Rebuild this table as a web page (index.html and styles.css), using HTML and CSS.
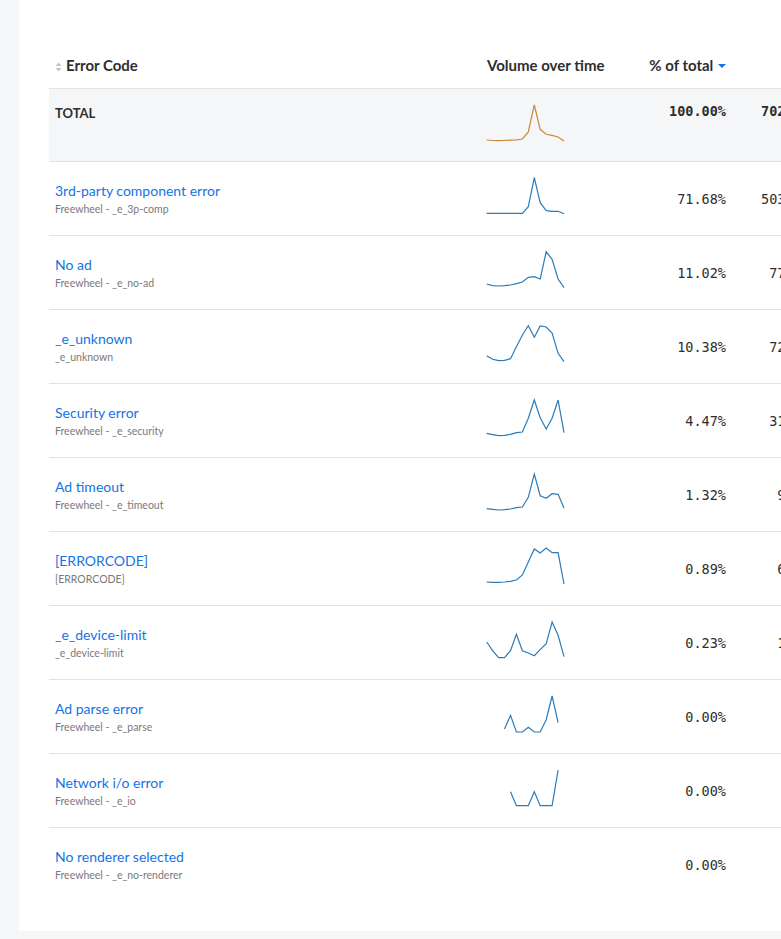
FILE: index.html
```html
<!DOCTYPE html>
<html>
<head>
<meta charset="utf-8">
<link rel="stylesheet" href="styles.css">
</head>
<body>
<div class="panel">
<table class="grid">
<colgroup><col class="c-name"><col class="c-vol"><col class="c-pct"><col class="c-cnt"></colgroup>
<thead>
<tr>
<th class="h-name"><span class="sort"><svg width="7" height="10" viewBox="0 0 7 10"><path d="M3.5 0.5 L6.5 4 H0.5 Z M3.5 9.5 L6.5 6 H0.5 Z" fill="#c4c4c4"/></svg></span>Error Code</th>
<th class="h-vol">Volume over time</th>
<th class="h-pct">% of total <svg class="caret" width="8" height="4" viewBox="0 0 8 4"><path d="M0 0 H8 L4 4 Z" fill="#1473e6"/></svg></th>
<th class="h-cnt"></th>
</tr>
</thead>
<tbody>
<tr class="total">
<td class="name"><span class="total-label">TOTAL</span></td>
<td class="vol"><svg class="spark" width="80" height="72" viewBox="0 0 80 72"><polyline class="line-total" points="0.7,51 6.6,51.5 12.6,51.7 18.5,51.5 24.5,51.2 30.4,51 36.4,50 42.3,43 48.3,16 54.2,40.3 60.2,45.3 66.1,46.3 72.1,48 78,52"/></svg></td>
<td class="pct">100.00%</td>
<td class="cnt">702,418</td>
</tr>
<tr>
<td class="name"><a class="title">3rd-party component error</a><div class="sub">Freewheel - _e_3p-comp</div></td>
<td class="vol"><svg class="spark" width="80" height="73" viewBox="0 1 80 73"><polyline class="line" points="0.7,52.3 6.6,52.3 12.6,52.3 18.5,52.3 24.5,52.3 30.4,52.3 36.4,52.3 42.3,45.7 48.3,16.7 54.2,41.7 60.2,49.7 66.1,50.3 72.1,50.3 78,52.7"/></svg></td>
<td class="pct">71.68%</td>
<td class="cnt">503,493</td>
</tr>
<tr>
<td class="name"><a class="title">No ad</a><div class="sub">Freewheel - _e_no-ad</div></td>
<td class="vol"><svg class="spark" width="80" height="73" viewBox="0 1 80 73"><polyline class="line" points="0.7,49 6.6,50.7 12.6,51 18.5,50.7 24.5,50 30.4,48.7 36.4,47 42.3,42.3 48.3,41.7 54.2,44 60.2,16.7 66.1,24.3 72.1,44 78,52.7"/></svg></td>
<td class="pct">11.02%</td>
<td class="cnt">77,407</td>
</tr>
<tr>
<td class="name"><a class="title">_e_unknown</a><div class="sub">_e_unknown</div></td>
<td class="vol"><svg class="spark" width="80" height="73" viewBox="0 1 80 73"><polyline class="line" points="0.7,46.7 6.6,50.3 12.6,51.7 18.5,51.3 24.5,49.7 30.4,37.7 36.4,26 42.3,16.7 48.3,28.3 54.2,17 60.2,18 66.1,24 72.1,44.3 78,52.7"/></svg></td>
<td class="pct">10.38%</td>
<td class="cnt">72,911</td>
</tr>
<tr>
<td class="name"><a class="title">Security error</a><div class="sub">Freewheel - _e_security</div></td>
<td class="vol"><svg class="spark" width="80" height="73" viewBox="0 1 80 73"><polyline class="line" points="0.7,50.3 6.6,51.7 12.6,52.7 18.5,52.3 24.5,51.3 30.4,49.7 36.4,49 42.3,35.3 48.3,17 54.2,34.7 60.2,46 66.1,35.3 72.1,17 78,49.7"/></svg></td>
<td class="pct">4.47%</td>
<td class="cnt">31,398</td>
</tr>
<tr>
<td class="name"><a class="title">Ad timeout</a><div class="sub">Freewheel - _e_timeout</div></td>
<td class="vol"><svg class="spark" width="80" height="73" viewBox="0 1 80 73"><polyline class="line" points="0.7,51.7 6.6,52.3 12.6,53 18.5,52.7 24.5,52 30.4,50.7 36.4,50 42.3,40.3 48.3,17 54.2,38.7 60.2,41.3 66.1,36.7 72.1,37.3 78,51"/></svg></td>
<td class="pct">1.32%</td>
<td class="cnt">9,272</td>
</tr>
<tr>
<td class="name"><a class="title">[ERRORCODE]</a><div class="sub">[ERRORCODE]</div></td>
<td class="vol"><svg class="spark" width="80" height="73" viewBox="0 1 80 73"><polyline class="line" points="0.7,51 6.6,51.3 12.6,51.3 18.5,51 24.5,50.3 30.4,49 36.4,44 42.3,31 48.3,18 54.2,22 60.2,17 66.1,21.7 72.1,21.7 78,53"/></svg></td>
<td class="pct">0.89%</td>
<td class="cnt">6,252</td>
</tr>
<tr>
<td class="name"><a class="title">_e_device-limit</a><div class="sub">_e_device-limit</div></td>
<td class="vol"><svg class="spark" width="80" height="73" viewBox="0 1 80 73"><polyline class="line" points="0.7,37 6.6,45.7 12.6,52.7 18.5,52.7 24.5,45.7 30.4,29.3 36.4,45.7 42.3,48 48.3,50.7 54.2,44.7 60.2,38.7 66.1,17 72.1,30.3 78,51.7"/></svg></td>
<td class="pct">0.23%</td>
<td class="cnt">1,616</td>
</tr>
<tr>
<td class="name"><a class="title">Ad parse error</a><div class="sub">Freewheel - _e_parse</div></td>
<td class="vol"><svg class="spark" width="80" height="73" viewBox="0 1 80 73"><polyline class="line" points="18.5,50 24.5,36.3 30.4,53 36.4,53 42.3,48.3 48.3,53 54.2,53 60.2,40.7 66.1,17 72.1,43.7"/></svg></td>
<td class="pct">0.00%</td>
<td class="cnt">14</td>
</tr>
<tr>
<td class="name"><a class="title">Network i/o error</a><div class="sub">Freewheel - _e_io</div></td>
<td class="vol"><svg class="spark" width="80" height="73" viewBox="0 1 80 73"><polyline class="line" points="24.5,38.7 30.4,52.7 36.4,52.7 42.3,52.7 48.3,38.7 54.2,52.7 60.2,52.7 66.1,52.7 72.1,17"/></svg></td>
<td class="pct">0.00%</td>
<td class="cnt">6</td>
</tr>
<tr class="last">
<td class="name"><a class="title">No renderer selected</a><div class="sub">Freewheel - _e_no-renderer</div></td>
<td class="vol"><svg class="spark" width="80" height="73" viewBox="0 1 80 73"></svg></td>
<td class="pct">0.00%</td>
<td class="cnt">2</td>
</tr>
</tbody>
</table>
</div>
</body>
</html>
```

FILE: styles.css
```css
html, body {
  margin: 0;
  padding: 0;
  overflow: hidden;
}
body {
  background: #f5f6f8;
  font-family: Lato, "Open Sans", sans-serif;
  color: #2e2e2e;
  width: 781px;
  height: 939px;
}
.panel {
  margin-left: 19px;
  width: 900px;
  background: #ffffff;
  padding: 40px 0 0 30px;
  box-sizing: border-box;
  height: 931px;
}
.grid {
  border-collapse: collapse;
  table-layout: fixed;
  width: 775px;
}
.c-name { width: 432px; }
.c-vol { width: 130px; }
.c-pct { width: 121px; }
.c-cnt { width: 92px; }

th {
  height: 48px;
  padding: 2px 6px 0;
  font-size: 15px;
  font-weight: 700;
  color: #2e2e2e;
  text-align: left;
  vertical-align: middle;
  border-bottom: 1px solid #e2e2e2;
  white-space: nowrap;
  box-sizing: border-box;
}
.h-pct, .h-cnt { text-align: right; }
.sort {
  display: inline-block;
  width: 11px;
  vertical-align: -1px;
}
.sort svg { display: block; }
.caret {
  vertical-align: 3px;
  margin-left: 1px;
}

td {
  padding: 2px 6px 0;
  border-bottom: 1px solid #e2e2e2;
  vertical-align: middle;
  height: 73px;
  box-sizing: border-box;
}
tr.last td { border-bottom: none; }
td.vol {
  padding: 0 0 0 5px;
  vertical-align: top;
}
.spark { display: block; overflow: visible; }
.spark polyline {
  fill: none;
  stroke-width: 1.2;
  stroke-linejoin: miter;
}
.line { stroke: #2b7bb9; }
.line-total { stroke: #c9893a; }

.title {
  display: block;
  font-size: 14px;
  line-height: 20px;
  color: #1473e6;
  text-decoration: none;
}
.sub {
  font-size: 10.5px;
  line-height: 16px;
  color: #7a7a7a;
}
td.pct, td.cnt {
  text-align: right;
  font-family: "DejaVu Sans Mono", "Liberation Mono", monospace;
  font-size: 13.5px;
  color: #2e2e2e;
  white-space: nowrap;
}
tr.total td {
  background: #f5f6f8;
  height: 73px;
}
tr.total td.name,
tr.total td.pct,
tr.total td.cnt {
  vertical-align: top;
  padding-top: 14px;
  font-weight: 700;
}
tr.total td.name { padding-top: 13px; }
.total-label {
  font-size: 13px;
  line-height: 18px;
  font-weight: 700;
  color: #2e2e2e;
}
```
